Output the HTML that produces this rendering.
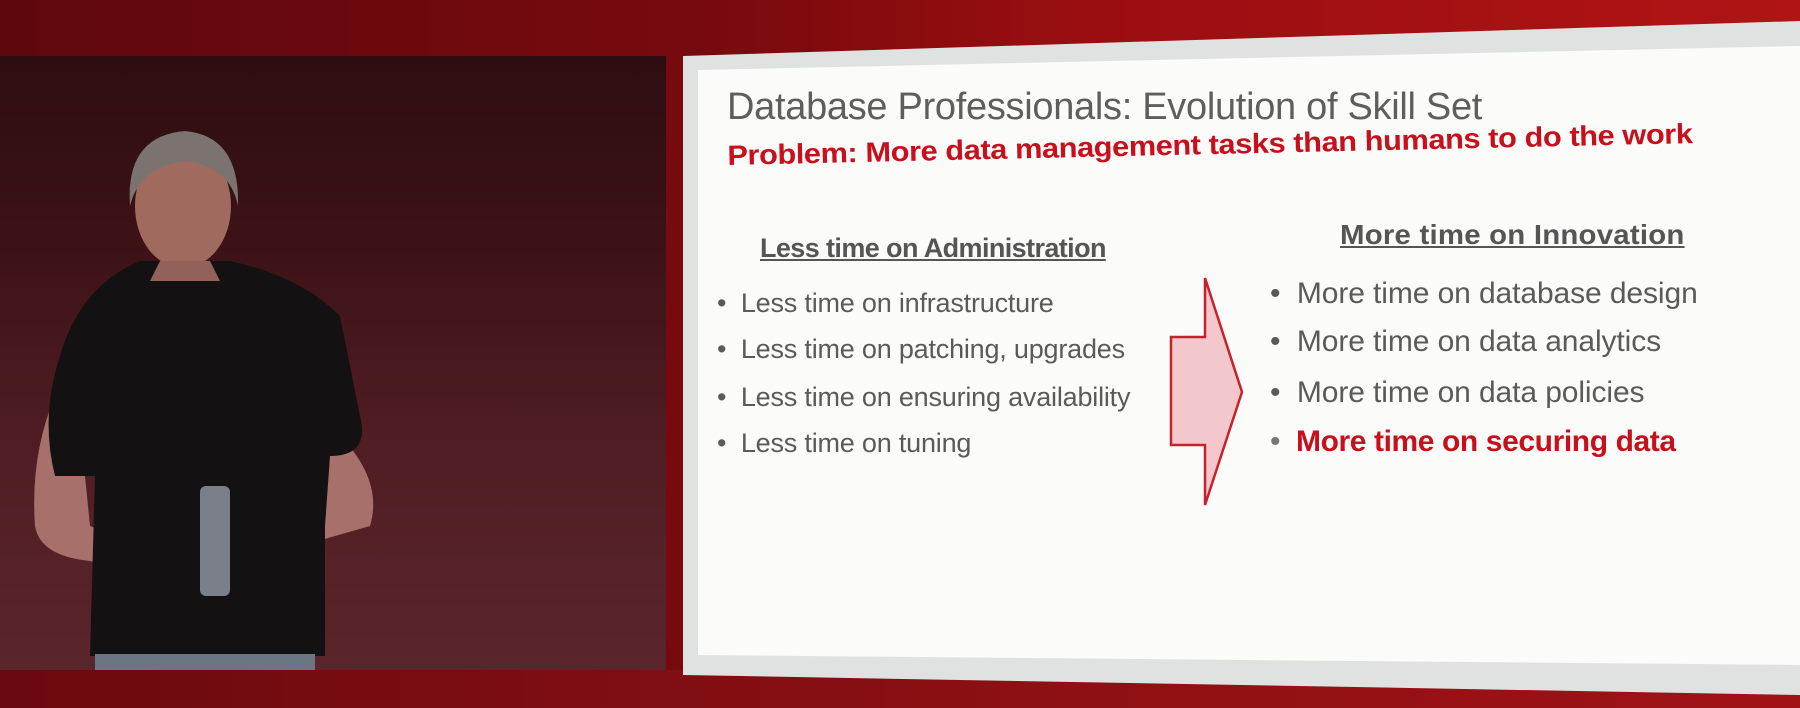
<!DOCTYPE html>
<html><head><meta charset="utf-8"><style>
html,body{margin:0;padding:0;width:1800px;height:708px;overflow:hidden;background:#6a0a0e;font-family:"Liberation Sans",sans-serif}
.bg{position:absolute;inset:0;background:linear-gradient(90deg,#5e080c 0%,#780a0e 40%,#9a0e10 60%,#b01414 100%)}
.bot{position:absolute;left:0;top:670px;width:1800px;height:38px;background:linear-gradient(90deg,#6a0a0e,#8e1014 60%,#a01216)}
.vid{position:absolute;left:0;top:56px;width:666px;height:614px;background:linear-gradient(180deg,#2e0d10 0%,#3c1216 30%,#4e1c22 60%,#5a262c 100%)}
.slide{position:absolute;left:0;top:0;width:1800px;height:708px}
.t{position:absolute;white-space:nowrap;color:#5a5a5a;transform-origin:left top}
</style></head><body>
<div class="bg"></div>
<div class="bot"></div>
<div class="vid">
<svg width="666" height="614" style="position:absolute;left:0;top:0">
<path d="M55 340 Q30 400 35 470 Q40 500 90 505 L150 520 L160 495 L90 470 L85 420 Z" fill="#a8706a"/>
<path d="M330 370 Q385 420 370 470 L300 490 L240 490 L245 460 L300 455 L320 420 Z" fill="#a8706a"/>
<path d="M140 205 L230 205 Q300 220 340 260 L360 360 Q370 400 330 400 L325 470 L325 600 L90 600 L95 420 L55 420 Q40 360 60 300 Q80 230 140 205 Z" fill="#141112"/>
<ellipse cx="183" cy="150" rx="48" ry="62" fill="#a06a5e"/>
<path d="M130 150 Q125 80 185 75 Q240 80 238 150 Q230 110 185 105 Q140 110 130 150 Z" fill="#7a7370"/>
<path d="M160 205 L210 205 L220 225 L150 225 Z" fill="#94605a"/>
<rect x="200" y="430" width="30" height="110" rx="6" fill="#7a7f8a"/>
<rect x="95" y="598" width="220" height="16" fill="#6a7684"/>
</svg>
</div>
<svg class="slide" width="1800" height="708">
<polygon points="683,56 1800,21 1800,695 683,675" fill="#e0e2e2"/>
<polygon points="698,70 1800,46 1800,665 698,655" fill="#fbfbfa"/>
<polygon points="1171,337 1205,337 1205,278 1242,392 1205,505 1205,445 1171,445" fill="#f3c8cc" stroke="#c8202c" stroke-width="2.5"/>
</svg>
<div class="t" style="left:727px;top:86px;font-size:38px;color:#5e5e5e;letter-spacing:-0.3px">Database Professionals: Evolution of Skill Set</div>
<div class="t" style="left:727px;top:140px;font-size:28px;font-weight:bold;color:#c8101c;letter-spacing:-0.4px;transform:rotate(-1.3deg) scaleX(1.1)">Problem: More data management tasks than humans to do the work</div>
<div class="t" style="left:760px;top:233px;font-size:27px;font-weight:bold;color:#555;text-decoration:underline;letter-spacing:-0.6px">Less time on Administration</div>
<div class="t" style="left:1340px;top:219px;font-size:28px;font-weight:bold;color:#555;text-decoration:underline;letter-spacing:0.2px;transform:scaleX(1.05)">More time on Innovation</div>
<div class="t" style="left:717px;top:288px;font-size:27px;letter-spacing:-0.2px">• &nbsp;Less time on infrastructure</div>
<div class="t" style="left:717px;top:334px;font-size:27px;letter-spacing:-0.2px">• &nbsp;Less time on patching, upgrades</div>
<div class="t" style="left:717px;top:382px;font-size:27px;letter-spacing:-0.2px">• &nbsp;Less time on ensuring availability</div>
<div class="t" style="left:717px;top:428px;font-size:27px;letter-spacing:-0.2px">• &nbsp;Less time on tuning</div>
<div class="t" style="left:1270px;top:277px;font-size:30px;letter-spacing:-0.1px">• &nbsp;More time on database design</div>
<div class="t" style="left:1270px;top:325px;font-size:30px;letter-spacing:-0.1px">• &nbsp;More time on data analytics</div>
<div class="t" style="left:1270px;top:376px;font-size:30px;letter-spacing:-0.1px">• &nbsp;More time on data policies</div>
<div class="t" style="left:1270px;top:425px;font-size:30px;letter-spacing:-0.4px;color:#c8101c;font-weight:bold"><span style="color:#777;font-weight:normal">•</span> &nbsp;More time on securing data</div>
</body></html>
